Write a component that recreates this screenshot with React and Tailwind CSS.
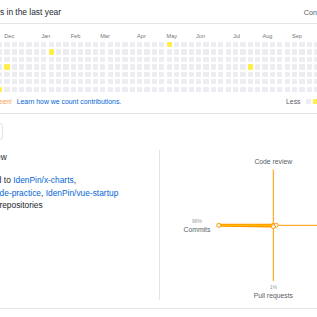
const L1 = '#ffee4a';

// cells that are lit, as "column,row" (column -1 is the partly cut one on the left)
const lit = new Set(['-1,6', '0,3', '6,1', '22,0', '33,3']);

const months = [
  ['Dec', 'col-start-[2]'],
  ['Jan', 'col-start-[7]'],
  ['Feb', 'col-start-[11]'],
  ['Mar', 'col-start-[15]'],
  ['Apr', 'col-start-[20]'],
  ['May', 'col-start-[24]'],
  ['Jun', 'col-start-[28]'],
  ['Jul', 'col-start-[33]'],
  ['Aug', 'col-start-[37]'],
  ['Sep', 'col-start-[41]'],
];

const Calendar = () => {
  const cells = [];
  for (let c = -1; c <= 42; c++) {
    for (let r = 0; r < 7; r++) {
      const on = lit.has(`${c},${r}`);
      cells.push(
        <div
          key={`${c}-${r}`}
          className={on ? 'rounded-[1px] bg-[#ffee4a]' : 'rounded-[1px] bg-[#ebedf0]'}
        />
      );
    }
  }

  return (
    <div className="-ml-[3.08px]">
      <div className="grid grid-cols-[repeat(44,5.3px)] gap-x-[2.08px] text-[5.6px] leading-[6px] text-[#767676]">
        {months.map(([m, cls]) => (
          <span key={m} className={`${cls} whitespace-nowrap`}>{m}</span>
        ))}
      </div>
      <div className="mt-[2.6px] grid grid-flow-col grid-rows-[repeat(7,5.3px)] auto-cols-[5.3px] gap-x-[2.08px] gap-y-[2.15px]">
        {cells}
      </div>
    </div>
  );
};

const ActivityChart = () => (
  <svg width="160" height="158" className="block overflow-visible">
    <line x1="113.3" y1="19.5" x2="113.3" y2="131" stroke="#fe9600" strokeWidth="1" />
    <line x1="58.7" y1="75.3" x2="168.3" y2="75.3" stroke="#fe9600" strokeWidth="1" />
    <polygon
      points="58.7,75.3 113.3,75.3 116,75.3 113.3,76"
      fill="#ffc501"
      stroke="#fe9600"
      strokeWidth="3"
      strokeLinejoin="round"
    />
    <line x1="58.7" y1="75.3" x2="113.3" y2="75.3" stroke="#ffc501" strokeWidth="1" />
    <circle cx="58.7" cy="75.3" r="2" fill="#fff" stroke="#fe9600" strokeWidth="1" />
    <circle cx="113.3" cy="75.3" r="2" fill="#fff" stroke="#fe9600" strokeWidth="1" />
    <circle cx="116.3" cy="75.3" r="2" fill="#fff" stroke="#fe9600" strokeWidth="1" />
    <circle cx="113.3" cy="76.6" r="2" fill="#fff" stroke="#fe9600" strokeWidth="1" />

    <text x="113.3" y="14.3" textAnchor="middle" fontSize="6.8" fill="#586069">Code review</text>
    <text x="37" y="73.3" textAnchor="middle" fontSize="5" fill="#959da5">96%</text>
    <text x="37" y="81.7" textAnchor="middle" fontSize="6.8" fill="#586069">Commits</text>
    <text x="113.3" y="139.3" textAnchor="middle" fontSize="5" fill="#959da5">1%</text>
    <text x="113.3" y="148" textAnchor="middle" fontSize="6.8" fill="#586069">Pull requests</text>
  </svg>
);

const App = () => {
  return (
    <div className="h-[317px] w-[317px] overflow-hidden bg-white font-['Liberation_Sans',Arial,sans-serif] text-[#24292e]">
      {/* heading */}
      <div className="flex h-[23px] justify-between">
        <div className="flex w-[61px] shrink-0 justify-end pt-[6.7px]">
          <h2 className="whitespace-nowrap text-[8.4px] font-normal leading-[10px]">
            486 contributions in the last year
          </h2>
        </div>
        <div className="w-[13.3px] shrink-0 whitespace-nowrap pt-[8.5px] text-[7.2px] leading-[8px] text-[#586069]">
          Contribution settings
        </div>
      </div>

      {/* calendar box */}
      <div className="h-[91px] border-y border-[#e1e4e8] pt-[9.4px]">
        <Calendar />
        <div className="mt-[5.9px] flex text-[6.9px] leading-[8px]">
          <div className="flex w-[286px] shrink-0">
            <div className="flex w-[12px] shrink-0 justify-end">
              <span className="whitespace-nowrap text-[#f9a03f]">Happy Halloween!</span>
            </div>
            <a href="#" className="ml-[4.7px] whitespace-nowrap text-[#0366d6]">
              Learn how we count contributions.
            </a>
          </div>
          <div className="flex shrink-0 items-center whitespace-nowrap text-[#586069]">
            <span>Less</span>
            <div className="ml-[5px] flex gap-[2.5px]">
              <div className="h-[5px] w-[5.2px] rounded-[1px] bg-[#ebedf0]" />
              <div className="h-[5px] w-[5.2px] rounded-[1px] bg-[#ffee4a]" />
              <div className="h-[5px] w-[5.2px] rounded-[1px] bg-[#ffc501]" />
              <div className="h-[5px] w-[5.2px] rounded-[1px] bg-[#fe9600]" />
              <div className="h-[5px] w-[5.2px] rounded-[1px] bg-[#03001c]" />
            </div>
            <span className="ml-[3px]">More</span>
          </div>
        </div>
      </div>

      {/* org filter */}
      <div className="h-[36px] pt-[9px]">
        <div className="-ml-[20px] h-[17px] w-[23px] rounded-[3px] border border-[#e1e4e8]" />
      </div>

      {/* activity overview */}
      <div className="border-b border-[#e1e4e8] pb-[8px]">
        <div className="flex h-[150px]">
          <div className="w-[160px] shrink-0 border-r border-[#e1e4e8] pt-[2px]">
            <div className="flex w-[6.7px] justify-end">
              <h3 className="whitespace-nowrap text-[8.4px] font-normal leading-[10px]">Activity overview</h3>
            </div>
            <div className="mt-[12px] text-[8.4px] leading-[12.5px]">
              <div className="flex w-[76px] justify-end">
                <span className="whitespace-nowrap">
                  Contributed to <a href="#" className="text-[#0366d6]">IdenPin/x-charts</a>,
                </span>
              </div>
              <div className="flex w-[118.3px] justify-end">
                <span className="whitespace-nowrap">
                  <a href="#" className="text-[#0366d6]">IdenPin/code-practice</a>,{' '}
                  <a href="#" className="text-[#0366d6]">IdenPin/vue-startup</a>
                </span>
              </div>
              <div className="flex w-[42.7px] justify-end">
                <span className="whitespace-nowrap">and 2 other repositories</span>
              </div>
            </div>
          </div>
          <div className="flex-1">
            <ActivityChart />
          </div>
        </div>
      </div>
    </div>
  );
};

export default App;
